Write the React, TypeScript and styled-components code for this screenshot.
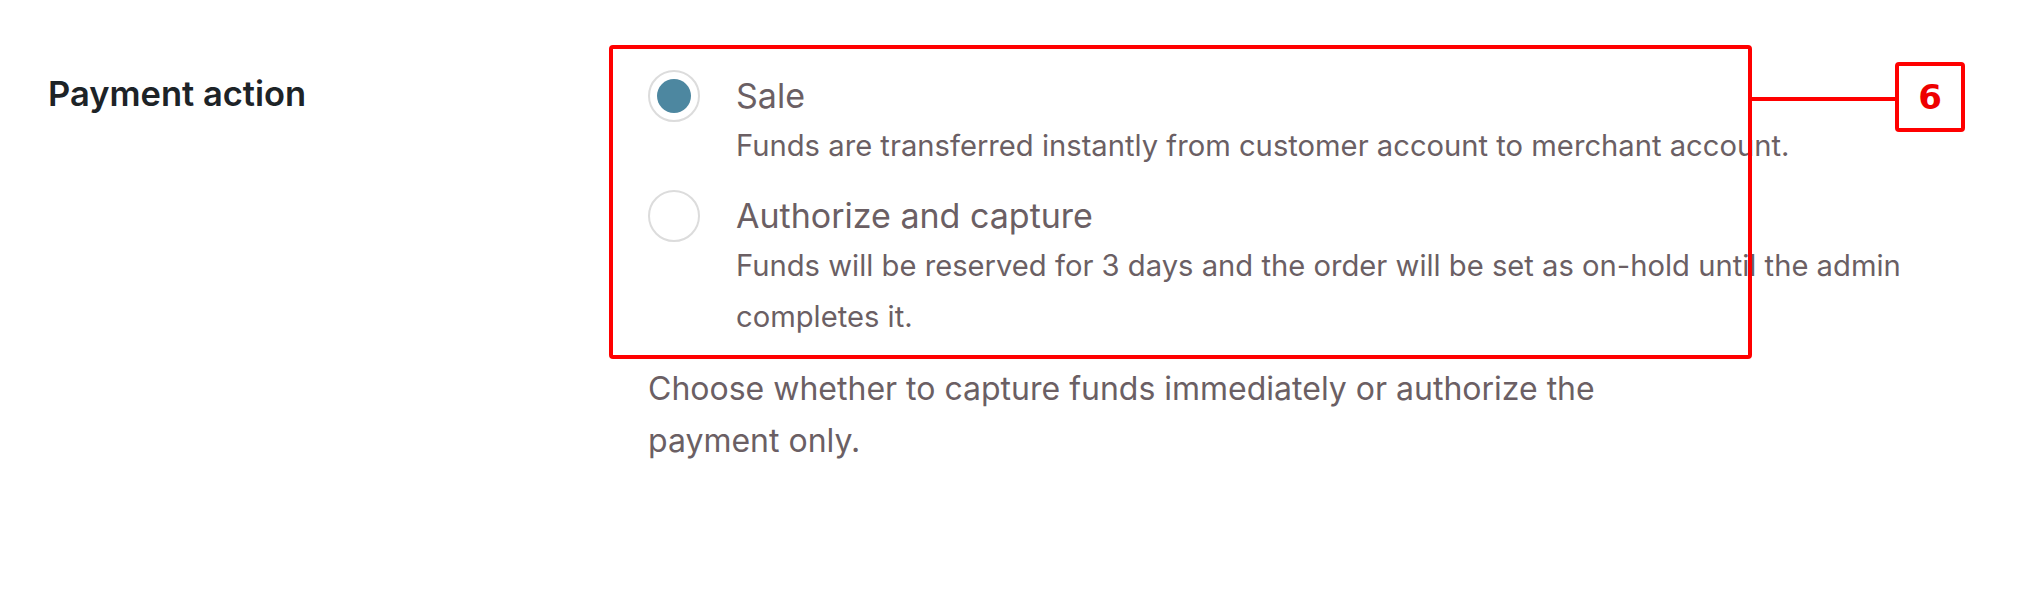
import React from "react";
import styled, { createGlobalStyle } from "styled-components";

const GlobalStyle = createGlobalStyle`
  html, body {
    margin: 0;
    padding: 0;
    background: #ffffff;
  }
  body {
    font-family: Inter, "Noto Sans", "Liberation Sans", sans-serif;
    -webkit-font-smoothing: antialiased;
  }
`;

const Page = styled.div`
  width: 2028px;
  height: 608px;
  box-sizing: border-box;
  padding: 70px 0 0 48px;
  background: #ffffff;
`;

const SettingRow = styled.div`
  display: grid;
  grid-template-columns: 600px 1fr;
  align-items: start;
`;

const Label = styled.div`
  font-size: 34.5px;
  font-weight: 600;
  line-height: 48px;
  color: #1d2327;
`;

const Field = styled.div`
  display: flex;
  flex-direction: column;
  padding-top: 2px;
`;

const OptionList = styled.div`
  position: relative;
  display: flex;
  flex-direction: column;
  gap: 21px;
`;

const Option = styled.label`
  display: grid;
  grid-template-columns: 52px 1fr;
  column-gap: 36px;
  cursor: pointer;
`;

const Radio = styled.span<{ $checked?: boolean }>`
  grid-row: 1;
  grid-column: 1;
  align-self: center;
  width: 52px;
  height: 52px;
  margin: -2px 0;
  box-sizing: border-box;
  border-radius: 50%;
  border: 2px solid #dcdcdc;
  background: #ffffff;
  display: flex;
  align-items: center;
  justify-content: center;

  &::after {
    content: "";
    width: 34px;
    height: 34px;
    border-radius: 50%;
    background: ${(p) => (p.$checked ? "#4d87a0" : "transparent")};
  }
`;

const OptionTitle = styled.span`
  grid-row: 1;
  grid-column: 2;
  font-size: 34px;
  line-height: 48px;
  color: #6b5f64;
`;

const OptionDesc = styled.span`
  grid-row: 2;
  grid-column: 2;
  max-width: 1200px;
  font-size: 29.2px;
  line-height: 51px;
  color: #6b5f64;
`;

const HelpText = styled.p`
  margin: 21px 0 0;
  max-width: 1010px;
  font-size: 32px;
  line-height: 52px;
  color: #6b5f64;
`;

const Annotation = styled.div`
  position: absolute;
  top: -27px;
  left: -39px;
  display: flex;
  align-items: flex-start;
  pointer-events: none;
`;

const Highlight = styled.div`
  width: 1143px;
  height: 314px;
  box-sizing: border-box;
  border: 4px solid #ff0000;
  border-radius: 4px;
`;

const Connector = styled.div`
  width: 147px;
  height: 4px;
  margin-top: 52px;
  margin-left: -4px;
  background: #ff0000;
`;

const Badge = styled.div`
  width: 70px;
  height: 70px;
  margin-top: 17px;
  box-sizing: border-box;
  border: 4px solid #ff0000;
  border-radius: 4px;
  background: #ffffff;
  display: flex;
  align-items: center;
  justify-content: center;
  font-family: "DejaVu Sans", Inter, sans-serif;
  font-weight: 700;
  font-size: 34px;
  color: #ee0000;
`;

const options = [
  {
    id: "sale",
    title: "Sale",
    desc: "Funds are transferred instantly from customer account to merchant account.",
    checked: true,
  },
  {
    id: "authorize",
    title: "Authorize and capture",
    desc: "Funds will be reserved for 3 days and the order will be set as on-hold until the admin completes it.",
    checked: false,
  },
];

export default function App() {
  return (
    <>
      <GlobalStyle />
      <Page>
        <SettingRow>
          <Label>Payment action</Label>
          <Field>
            <OptionList>
              {options.map((o) => (
                <Option key={o.id}>
                  <Radio $checked={o.checked} />
                  <OptionTitle>{o.title}</OptionTitle>
                  <OptionDesc>{o.desc}</OptionDesc>
                </Option>
              ))}
              <Annotation>
                <Highlight />
                <Connector />
                <Badge>6</Badge>
              </Annotation>
            </OptionList>
            <HelpText>
              Choose whether to capture funds immediately or authorize the payment only.
            </HelpText>
          </Field>
        </SettingRow>
      </Page>
    </>
  );
}
